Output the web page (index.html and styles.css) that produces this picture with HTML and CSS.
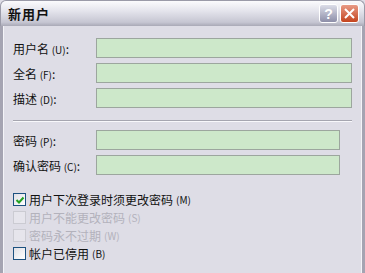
FILE: index.html
```html
<!DOCTYPE html>
<html lang="zh-CN">
<head>
    <meta charset="UTF-8">
    <title>新用户</title>
    <link rel="stylesheet" href="styles.css">
</head>
<body>

<div class="window">
    <div class="titlebar">
        <span class="title">新用户</span>
        <div class="caption-buttons">
            <div class="cap-btn help">?</div>
            <div class="cap-btn close">
                <svg width="11" height="11" viewBox="0 0 11 11"><path d="M1 1 L10 10 M10 1 L1 10" stroke="#fff" stroke-width="2"/></svg>
            </div>
        </div>
    </div>

    <div class="content">
        <div class="fields">
            <label>用户名 <span class="acc">(U)</span>:</label>
            <div class="field"></div>
            <label>全名 <span class="acc">(F)</span>:</label>
            <div class="field"></div>
            <label>描述 <span class="acc">(D)</span>:</label>
            <div class="field"></div>
        </div>

        <div class="separator"></div>

        <div class="fields short">
            <label>密码 <span class="acc">(P)</span>:</label>
            <div class="field"></div>
            <label>确认密码 <span class="acc">(C)</span>:</label>
            <div class="field"></div>
        </div>

        <div class="checks">
            <div class="check">
                <span class="box checked">
                    <svg width="10" height="10" viewBox="0 0 10 10"><path d="M1.5 5 L4 7.5 L8.5 2.5" fill="none" stroke="#21a121" stroke-width="2"/></svg>
                </span>
                用户下次登录时须更改密码 <span class="acc">(M)</span>
            </div>
            <div class="check disabled">
                <span class="box"></span>
                用户不能更改密码 <span class="acc">(S)</span>
            </div>
            <div class="check disabled">
                <span class="box"></span>
                密码永不过期 <span class="acc">(W)</span>
            </div>
            <div class="check">
                <span class="box"></span>
                帐户已停用 <span class="acc">(B)</span>
            </div>
        </div>
    </div>
</div>

</body>
</html>
```

FILE: styles.css
```css
body {
    margin: 0;
    font-family: "Noto Sans CJK SC", "DejaVu Sans", sans-serif;
    font-size: 12px;
    color: #111;
    background-color: #dedde6;
}
.window {
    width: 365px;
    height: 273px;
    overflow: hidden;
    background-color: #dedde6;
}
.titlebar {
    height: 26px;
    display: flex;
    align-items: center;
    justify-content: space-between;
    padding: 0 5px 0 7px;
    border-radius: 6px 6px 0 0;
    background: linear-gradient(to bottom, #fbfbfd 0%, #e4e4ec 40%, #c6c6d2 85%, #a9a9b6 100%);
    border: 1px solid #9a9aa8;
    border-bottom: none;
    box-sizing: border-box;
}
.title {
    font-weight: bold;
    font-size: 13px;
    color: #111;
    letter-spacing: 1px;
}
.caption-buttons {
    display: flex;
    gap: 2px;
}
.cap-btn {
    width: 19px;
    height: 19px;
    border-radius: 3px;
    display: flex;
    align-items: center;
    justify-content: center;
    box-sizing: border-box;
    border: 1px solid #fff;
}
.help {
    background: linear-gradient(to bottom, #dcdde8, #8d8ea8);
    color: #fff;
    font-family: "Liberation Sans", sans-serif;
    font-weight: bold;
    font-size: 14px;
}
.close {
    background: linear-gradient(to bottom, #e89a86, #c4441e);
}
.content {
    height: 247px;
    border-left: 3px solid #a5a4b2;
    border-right: 3px solid #a5a4b2;
    box-shadow: inset 1px 0 0 #f4f4f8, inset -1px 0 0 #f4f4f8;
    padding: 12px 10px 0 10px;
    box-sizing: border-box;
}
.fields {
    display: grid;
    grid-template-columns: 83px 256px;
    row-gap: 5px;
    align-items: center;
}
.fields.short {
    grid-template-columns: 83px 244px;
}
label {
    white-space: nowrap;
}
.acc {
    font-size: 10px;
}
.field {
    height: 20px;
    box-sizing: border-box;
    background-color: #cde8ca;
    border: 1px solid #9ca69e;
}
.separator {
    height: 0;
    border-top: 1px solid #a6a6b0;
    border-bottom: 1px solid #f8f8fb;
    margin: 12px 0 8px 0;
    width: 339px;
}
.checks {
    margin-top: 18px;
    display: flex;
    flex-direction: column;
    gap: 5px;
}
.check {
    display: flex;
    align-items: center;
    gap: 3px;
    height: 13px;
    white-space: nowrap;
}
.box {
    width: 13px;
    height: 13px;
    box-sizing: border-box;
    border: 1px solid #1c5180;
    background: linear-gradient(to bottom right, #e0e0e6, #ffffff);
    display: flex;
    align-items: center;
    justify-content: center;
}
.disabled {
    color: #b3b2bc;
}
.disabled .box {
    border-color: #cbcbd2;
    background: #e6e5ec;
}
```
